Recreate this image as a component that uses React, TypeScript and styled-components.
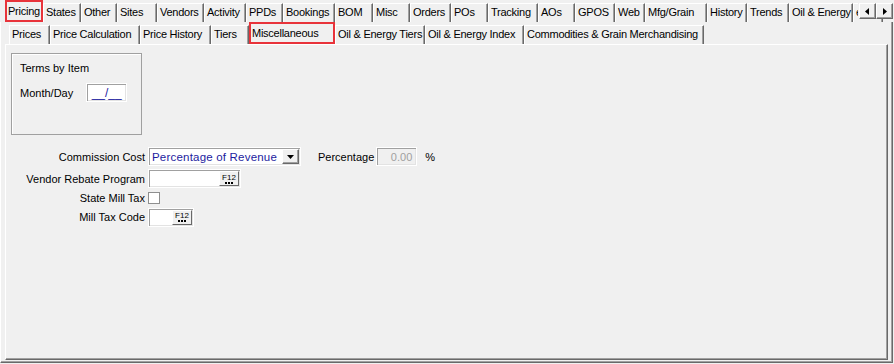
import React from "react";
import styled, { createGlobalStyle } from "styled-components";

const GlobalStyle = createGlobalStyle`
  * { box-sizing: border-box; }
  body {
    margin: 0;
    background: #f0f0f0;
    font-family: "Liberation Sans", Arial, sans-serif;
    font-size: 11px;
    color: #000;
  }
`;

const Window = styled.div`
  width: 894px;
  height: 364px;
  display: flex;
  flex-direction: column;
  background: #f0f0f0;
  overflow: hidden;
`;

const TabStrip = styled.div<{ $height: number; $indent: number }>`
  display: flex;
  align-items: flex-end;
  height: ${(p) => p.$height}px;
  padding-left: ${(p) => p.$indent}px;
  position: relative;
`;

const Tab = styled.div<{ $w: number; $active?: boolean }>`
  flex: 0 0 auto;
  width: ${(p) => p.$w}px;
  height: ${(p) => (p.$active ? 22 : 19)}px;
  padding: ${(p) => (p.$active ? 4 : 2)}px 0 0 2px;
  border-top: 1px solid #fff;
  border-left: 1px solid #fff;
  border-right: 1px solid #696969;
  box-shadow: inset -1px 0 0 #a0a0a0;
  background: #f0f0f0;
  white-space: nowrap;
  letter-spacing: -0.25px;
  position: relative;
  z-index: ${(p) => (p.$active ? 2 : 1)};
  outline: ${(p) => (p.$active ? "2px solid #e8333a" : "none")};
  outline-offset: -2px;
`;

const ScrollButtons = styled.div`
  position: absolute;
  right: 1px;
  top: 3px;
  display: flex;
  z-index: 3;
  background: #f0f0f0;
  padding-left: 1px;
`;

const ScrollButton = styled.div`
  width: 17px;
  height: 16px;
  background: #f0f0f0;
  border-top: 1px solid #fff;
  border-left: 1px solid #fff;
  border-right: 1px solid #696969;
  border-bottom: 1px solid #696969;
  box-shadow: inset -1px -1px 0 #a0a0a0;
  display: flex;
  align-items: center;
  justify-content: center;
`;

const OuterPanel = styled.div`
  flex: 1;
  display: flex;
  flex-direction: column;
  margin: 0 1px 1px 0;
  border-left: 1px solid #fff;
  border-right: 1px solid #696969;
  border-bottom: 1px solid #696969;
  box-shadow: inset -1px -1px 0 #a0a0a0;
  padding: 0 2px 2px 2px;
`;

const InnerPanel = styled.div`
  flex: 1;
  margin: 0 2px 0 2px;
  border-top: 1px solid #fff;
  border-left: 1px solid #fff;
  border-right: 1px solid #696969;
  border-bottom: 1px solid #696969;
  box-shadow: inset -1px -1px 0 #a0a0a0;
  padding: 8px 0 0 0;
`;

const GroupBox = styled.div`
  margin-left: 5px;
  width: 131px;
  height: 82px;
  border: 1px solid #a0a0a0;
  box-shadow: inset 1px 1px 0 #fff;
  padding: 8px 0 0 8px;
`;

const GroupTitle = styled.div`
  height: 14px;
  margin-bottom: 7px;
`;

const InlineRow = styled.div`
  display: flex;
  align-items: center;
  gap: 13px;
`;

const TextBox = styled.div<{ $w: number; $disabled?: boolean; $align?: string }>`
  width: ${(p) => p.$w}px;
  height: 19px;
  background: ${(p) => (p.$disabled ? "#f0f0f0" : "#fff")};
  border: 1px solid #fff;
  box-shadow: inset 1px 1px 0 #a0a0a0, inset -1px -1px 0 #e3e3e3;
  color: ${(p) => (p.$disabled ? "#a0a0a0" : "#1c1ca0")};
  font-size: ${(p) => (p.$disabled ? 11 : 12)}px;
  display: flex;
  align-items: center;
  justify-content: ${(p) => p.$align || "flex-start"};
  padding: 0 4px;
  position: relative;
  white-space: nowrap;
`;

const Form = styled.div`
  margin-top: 12px;
  display: grid;
  grid-template-columns: 139px auto;
  grid-template-rows: 19px 19px 13px 20px;
  column-gap: 3px;
  row-gap: 3px;
  align-items: center;
`;

const Label = styled.div`
  text-align: right;
  white-space: nowrap;
`;

const Select = styled.div`
  width: 153px;
  height: 19px;
  background: #fff;
  border: 1px solid #fff;
  box-shadow: inset 1px 1px 0 #a0a0a0, inset -1px -1px 0 #e3e3e3;
  display: flex;
  align-items: center;
  padding-left: 3px;
  color: #1c1ca0;
  font-size: 11.5px;
  letter-spacing: 0.2px;
  position: relative;
`;

const DropButton = styled.div`
  position: absolute;
  right: 1px;
  top: 1px;
  width: 17px;
  height: 15px;
  background: #f0f0f0;
  border-top: 1px solid #fff;
  border-left: 1px solid #fff;
  border-right: 1px solid #696969;
  border-bottom: 1px solid #696969;
  box-shadow: inset -1px -1px 0 #a0a0a0;
  display: flex;
  align-items: center;
  justify-content: center;
`;

const FieldGroup = styled.div`
  display: flex;
  align-items: center;
`;

const PercentLabel = styled.span`
  margin: 0 2px 0 17px;
`;

const PercentSign = styled.span`
  margin-left: 8px;
`;

const F12Button = styled.div`
  position: absolute;
  right: 1px;
  top: 1px;
  width: 20px;
  height: 15px;
  background: #f0f0f0;
  border-top: 1px solid #fff;
  border-left: 1px solid #fff;
  border-right: 1px solid #696969;
  border-bottom: 1px solid #696969;
  display: flex;
  flex-direction: column;
  align-items: center;
  justify-content: center;
  font-size: 8px;
  line-height: 7px;
  color: #000;
`;

const Dots = styled.span`
  display: block;
  width: 8px;
  height: 2px;
  margin-top: 1px;
  border-bottom: 2px dotted #000;
`;

const CheckBox = styled.div`
  width: 12px;
  height: 12px;
  background: #fff;
  border: 1px solid #8e8f8f;
`;

const topTabs: [string, number][] = [
  ["Pricing", 38], ["States", 38], ["Other", 36], ["Sites", 40], ["Vendors", 47],
  ["Activity", 42], ["PPDs", 37], ["Bookings", 52], ["BOM", 38], ["Misc", 37],
  ["Orders", 41], ["POs", 37], ["Tracking", 50], ["AOs", 37], ["GPOS", 40],
  ["Web", 30], ["Mfg/Grain", 62], ["History", 40], ["Trends", 42], ["Oil & Energy", 64],
  ["epos", 30],
];

const subTabs: [string, number][] = [
  ["Prices", 41], ["Price Calculation", 90], ["Price History", 71], ["Tiers", 38],
  ["Miscellaneous", 86], ["Oil & Energy Tiers", 90], ["Oil & Energy Index", 99],
  ["Commodities & Grain Merchandising", 180],
];

const Arrow = ({ dir }: { dir: "left" | "right" }) => (
  <svg width="5" height="7" viewBox="0 0 5 7">
    {dir === "left" ? <path d="M4 0 L0 3.5 L4 7 Z" fill="#000" /> : <path d="M1 0 L5 3.5 L1 7 Z" fill="#000" />}
  </svg>
);

const F12 = () => (
  <F12Button>
    <span>F12</span>
    <Dots />
  </F12Button>
);

export default function App() {
  return (
    <>
      <GlobalStyle />
      <Window>
        <TabStrip $height={22} $indent={5}>
          {topTabs.map(([t, w], i) => (
            <Tab key={t} $w={w} $active={i === 0}>{t}</Tab>
          ))}
          <ScrollButtons>
            <ScrollButton><Arrow dir="left" /></ScrollButton>
            <ScrollButton><Arrow dir="right" /></ScrollButton>
          </ScrollButtons>
        </TabStrip>
        <OuterPanel>
          <TabStrip $height={22} $indent={6}>
            {subTabs.map(([t, w], i) => (
              <Tab key={t} $w={w} $active={i === 4}>{t}</Tab>
            ))}
          </TabStrip>
          <InnerPanel>
            <GroupBox>
              <GroupTitle>Terms by Item</GroupTitle>
              <InlineRow>
                <span>Month/Day</span>
                <TextBox $w={41} $align="center">__/__</TextBox>
              </InlineRow>
            </GroupBox>
            <Form>
              <Label>Commission Cost</Label>
              <FieldGroup>
                <Select>
                  Percentage of Revenue
                  <DropButton>
                    <svg width="7" height="4" viewBox="0 0 7 4"><path d="M0 0 H7 L3.5 4 Z" fill="#000" /></svg>
                  </DropButton>
                </Select>
                <PercentLabel>Percentage</PercentLabel>
                <TextBox $w={41} $disabled $align="flex-end">0.00</TextBox>
                <PercentSign>%</PercentSign>
              </FieldGroup>
              <Label>Vendor Rebate Program</Label>
              <FieldGroup>
                <TextBox $w={93}><F12 /></TextBox>
              </FieldGroup>
              <Label>State Mill Tax</Label>
              <FieldGroup>
                <CheckBox />
              </FieldGroup>
              <Label>Mill Tax Code</Label>
              <FieldGroup>
                <TextBox $w={46}><F12 /></TextBox>
              </FieldGroup>
            </Form>
          </InnerPanel>
        </OuterPanel>
      </Window>
    </>
  );
}
